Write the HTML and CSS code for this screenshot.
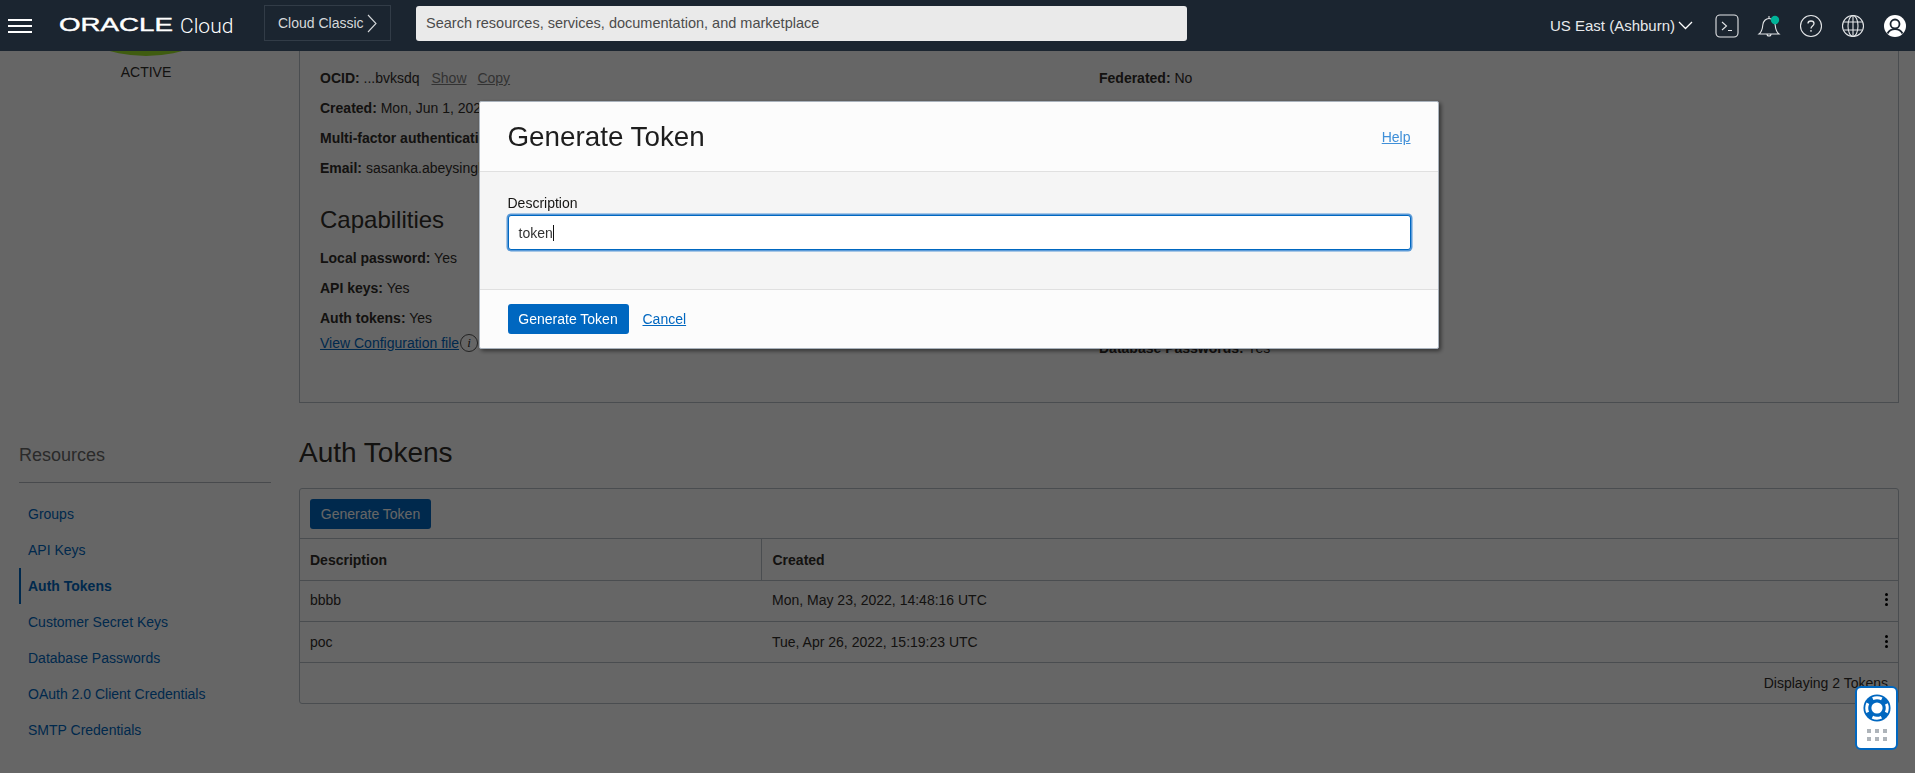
FILE: index.html
```html
<!DOCTYPE html>
<html lang="en">
<head>
    <meta charset="UTF-8">
    <meta name="viewport" content="width=device-width, initial-scale=1.0">
    <title>Auth Tokens - Oracle Cloud</title>
    <link rel="stylesheet" href="styles.css">
</head>
<body>
    <!-- Top bar -->
    <header class="topbar">
        <button class="hamburger" aria-label="Menu"><span></span><span></span><span></span></button>
        <div class="logo"><span class="logo-oracle">ORACLE</span><span class="logo-cloud">Cloud</span></div>
        <div class="classic">Cloud Classic
            <svg width="10" height="19" viewBox="0 0 10 19"><path d="M1 1l8 8.500-8 8.500" fill="none" stroke="#d5d8da" stroke-width="1.100"/></svg>
        </div>
        <div class="search">Search resources, services, documentation, and marketplace</div>
        <div class="region">US East (Ashburn)
            <svg width="15" height="9" viewBox="0 0 15 9"><path d="M1 1l6.500 6.500L14 1" fill="none" stroke="#fff" stroke-width="1.300"/></svg>
        </div>
        <div class="tools">
            <svg width="24" height="24" viewBox="0 0 24 24" fill="none" stroke="#e4e6e8" stroke-width="1.100"><rect x="1" y="1" width="22" height="22" rx="4"/><path d="M7 8l4.500 4L7 16M13 16.500h4"/></svg>
            <svg width="24" height="24" viewBox="0 0 24 24" fill="none" stroke="#e4e6e8" stroke-width="1.100"><path d="M2 20h20c-2.500-2-3.500-5-3.800-9C17.900 7 15 4.500 12 4.500S6.100 7 5.800 11C5.500 15 4.500 18 2 20z"/><path d="M10 20a2 2 0 004 0M12 4.500V2"/><circle cx="18" cy="6" r="4.200" fill="#00b398" stroke="none"/></svg>
            <svg width="24" height="24" viewBox="0 0 24 24" fill="none" stroke="#e4e6e8" stroke-width="1.100"><circle cx="12" cy="12" r="10.500"/><path d="M9 9.500C9 7.800 10.300 7 12 7s3 1 3 2.500c0 2.500-3 2.500-3 5M12 16v1.700" stroke-width="1.300"/></svg>
            <svg width="24" height="24" viewBox="0 0 24 24" fill="none" stroke="#e4e6e8" stroke-width="1.100"><circle cx="12" cy="12" r="10.500"/><ellipse cx="12" cy="12" rx="5" ry="10.500"/><path d="M12 1.500v21M2.500 8h19M2.500 16h19"/></svg>
            <svg width="24" height="24" viewBox="0 0 24 24"><circle cx="12" cy="12" r="11" fill="#fff"/><circle cx="12" cy="10" r="4.500" fill="none" stroke="#1b2530" stroke-width="1.800"/><path d="M4.500 19.500c1.500-3 4-4.300 7.500-4.300s6 1.300 7.500 4.300" fill="none" stroke="#1b2530" stroke-width="1.800"/></svg>
        </div>
    </header>

    <div class="page">
        <!-- Left column -->
        <aside class="sidebar">
            <div class="profile">
                <div class="avatar"></div>
                <div class="status">ACTIVE</div>
            </div>
            <h3 class="res-title">Resources</h3>
            <ul class="res-list">
                <li><a href="#">Groups</a></li>
                <li><a href="#">API Keys</a></li>
                <li class="active"><a href="#">Auth Tokens</a></li>
                <li><a href="#">Customer Secret Keys</a></li>
                <li><a href="#">Database Passwords</a></li>
                <li><a href="#">OAuth 2.0 Client Credentials</a></li>
                <li><a href="#">SMTP Credentials</a></li>
            </ul>
        </aside>

        <main class="content">
            <!-- User info -->
            <section class="info-panel">
                <div class="info-col">
                    <div class="info-row"><b>OCID:</b> ...bvksdq <a class="mini-link" href="#">Show</a> <a class="mini-link" href="#">Copy</a></div>
                    <div class="info-row"><b>Created:</b> Mon, Jun 1, 2020</div>
                    <div class="info-row"><b>Multi-factor authentication:</b> Disabled</div>
                    <div class="info-row"><b>Email:</b> sasanka.abeysinghe</div>
                    <h2 class="cap-title">Capabilities</h2>
                    <div class="info-row"><b>Local password:</b> Yes</div>
                    <div class="info-row"><b>API keys:</b> Yes</div>
                    <div class="info-row"><b>Auth tokens:</b> Yes</div>
                    <div class="config-row"><a href="#">View Configuration file</a><span class="info-icon">i</span></div>
                </div>
                <div class="info-col">
                    <div class="info-row"><b>Federated:</b> No</div>
                    <div class="info-gap"></div>
                    <div class="info-row"><b>Database Passwords:</b> Yes</div>
                </div>
            </section>

            <!-- Tokens table -->
            <h1 class="section-title">Auth Tokens</h1>
            <div class="table-box">
                <div class="table-actions"><button class="btn">Generate Token</button></div>
                <table class="tokens">
                    <thead>
                        <tr><th class="col-desc">Description</th><th class="col-created">Created</th><th class="col-menu"></th></tr>
                    </thead>
                    <tbody>
                        <tr><td>bbbb</td><td class="col-created">Mon, May 23, 2022, 14:48:16 UTC</td><td class="col-menu"><span class="kebab"><i></i><i></i><i></i></span></td></tr>
                        <tr><td>poc</td><td class="col-created">Tue, Apr 26, 2022, 15:19:23 UTC</td><td class="col-menu"><span class="kebab"><i></i><i></i><i></i></span></td></tr>
                    </tbody>
                </table>
                <div class="table-foot">Displaying 2 Tokens</div>
            </div>
        </main>
    </div>

    <!-- Dialog -->
    <div class="overlay">
        <div class="modal">
            <div class="modal-head">
                <h2>Generate Token</h2>
                <a href="#">Help</a>
            </div>
            <div class="modal-body">
                <label class="field-label" for="tokenDesc">Description</label>
                <div class="field" id="tokenDesc">token<span class="caret"></span></div>
            </div>
            <div class="modal-foot">
                <button class="btn">Generate Token</button>
                <a href="#">Cancel</a>
            </div>
        </div>
    </div>

    <!-- Help widget -->
    <div class="help-widget">
        <svg width="28" height="28" viewBox="0 0 30 30"><circle cx="15" cy="15" r="14.500" fill="#0067c0"/><circle cx="15" cy="15" r="11" fill="none" stroke="#fff" stroke-width="3.200" stroke-dasharray="10 7.280" stroke-dashoffset="5"/><circle cx="15" cy="15" r="6" fill="#fff"/></svg>
        <div class="dots"><i></i><i></i><i></i><i></i><i></i><i></i></div>
    </div>
</body>
</html>
```

FILE: styles.css
```css
* {
    margin: 0;
    padding: 0;
    box-sizing: border-box;
}

body {
    font-family: "Liberation Sans", Arial, sans-serif;
    font-size: 14px;
    color: #312d2a;
    background-color: #fff;
    height: 100vh;
    overflow: hidden;
}

a {
    color: #0067c0;
}

/* Top bar */
.topbar {
    position: relative;
    z-index: 5;
    height: 51px;
    padding-right: 8px;
    background-color: #1b2530;
    display: flex;
    align-items: center;
    color: #fff;
}

.hamburger {
    width: 24px;
    margin-left: 8px;
    display: flex;
    flex-direction: column;
    gap: 4px;
    background: none;
    border: none;
}

.hamburger span {
    height: 2px;
    background-color: #fff;
}

.logo {
    width: 205px;
    margin-left: 27px;
    flex-shrink: 0;
    display: flex;
    align-items: center;
}

.logo-oracle {
    display: inline-block;
    width: 74px;
    margin-right: 47px;
    font-size: 18px;
    transform: scaleX(1.54);
    transform-origin: left center;
    -webkit-text-stroke: 0.4px #fff;
}

.logo-cloud {
    font-family: Roboto, sans-serif;
    font-size: 21px;
    font-weight: 300;
}

.classic {
    width: 127px;
    height: 36px;
    margin-top: -5px;
    padding-left: 13px;
    display: flex;
    align-items: center;
    gap: 3px;
    flex-shrink: 0;
    border: 1px solid #323c47;
    color: #d5d8da;
    white-space: nowrap;
}

.search {
    width: 771px;
    height: 35px;
    margin-left: 25px;
    margin-top: -5px;
    padding-left: 10px;
    display: flex;
    align-items: center;
    background-color: #eaeaea;
    border-radius: 3px;
    font-size: 14.500px;
    color: #4c4c4c;
}

.region {
    margin-left: auto;
    display: flex;
    align-items: center;
    gap: 3px;
    font-size: 15px;
    color: #e8eaec;
    white-space: nowrap;
}

.tools {
    margin-left: 22px;
    display: flex;
    align-items: center;
    gap: 18px;
}

/* Page under the dialog */
.page {
    display: flex;
}

.sidebar {
    width: 299px;
    flex-shrink: 0;
    padding-right: 28px;
}

.profile {
    width: 292px;
    display: flex;
    flex-direction: column;
    align-items: center;
}

.avatar {
    width: 280px;
    height: 280px;
    margin-top: -275px;
    border-radius: 50%;
    background-color: #9ee52a;
}

.status {
    margin-top: 8px;
}

.res-title {
    margin-top: 365px;
    margin-left: 19px;
    padding-bottom: 16px;
    border-bottom: 1px solid #b4bac0;
    font-size: 18px;
    font-weight: 300;
    color: #6a6a6a;
}

.res-list {
    margin-top: 13px;
    margin-left: 19px;
    list-style: none;
}

.res-list li {
    height: 36px;
    padding-left: 9px;
    display: flex;
    align-items: center;
}

.res-list a {
    text-decoration: none;
}

.res-list .active {
    border-left: 2px solid #0067c0;
    padding-left: 7px;
    font-weight: bold;
}

.content {
    flex: 1;
    padding-right: 17px;
}

.info-panel {
    height: 352px;
    padding: 12px 20px 0;
    display: flex;
    border: 1px solid #b8c0c8;
    border-top: none;
}

.info-col {
    width: 779px;
}

.info-row {
    height: 30px;
    line-height: 30px;
    white-space: nowrap;
}

.info-gap {
    height: 240px;
}

.mini-link {
    margin-left: 8px;
    color: #7f7f7f;
}

.mini-link + .mini-link {
    margin-left: 7px;
}

.cap-title {
    height: 60px;
    padding-top: 23px;
    font-size: 24px;
    font-weight: normal;
}

.config-row {
    display: flex;
    align-items: center;
    height: 20px;
}

.info-icon {
    width: 18px;
    height: 18px;
    margin-left: 1px;
    border: 1px solid #555;
    border-radius: 50%;
    text-align: center;
    line-height: 16px;
    font-family: "Liberation Serif", serif;
    font-style: italic;
    font-size: 13px;
}

.section-title {
    height: 85px;
    padding-top: 34px;
    font-size: 28px;
    line-height: 32px;
    font-weight: normal;
}

.table-box {
    border: 1px solid #b8c0c8;
    border-radius: 3px;
}

.table-actions {
    height: 50px;
    padding: 10px;
    border-bottom: 1px solid #b8c0c8;
}

.btn {
    width: 121px;
    height: 30px;
    background-color: #0067c0;
    color: #fff;
    border: none;
    border-radius: 3px;
    font-family: inherit;
    font-size: 14px;
}

.tokens {
    width: 100%;
    border-collapse: collapse;
    table-layout: fixed;
}

.tokens th, .tokens td {
    height: 41px;
    padding: 0 10px;
    text-align: left;
    border-bottom: 1px solid #b8c0c8;
}

.tokens th {
    padding-top: 2px;
}

.tokens tbody tr:first-child td {
    padding-bottom: 2px;
}

.tokens .col-desc {
    width: 461px;
    border-right: 1px solid #b8c0c8;
}

.tokens .col-created {
    padding-left: 11px;
}

.tokens .col-menu {
    width: 26px;
    padding: 0;
}

.kebab {
    display: flex;
    flex-direction: column;
    align-items: center;
    gap: 2px;
    width: 24px;
    margin-left: 2px;
}

.kebab i {
    width: 3px;
    height: 3px;
    border-radius: 50%;
    background-color: #000;
}

.table-foot {
    height: 40px;
    line-height: 40px;
    padding-right: 10px;
    text-align: right;
}

/* Dialog */
.overlay {
    position: fixed;
    top: 51px;
    left: 0;
    right: 0;
    bottom: 0;
    z-index: 3;
    padding: 50px 0 0 2px;
    display: flex;
    justify-content: center;
    align-items: flex-start;
    background-color: rgba(0, 0, 0, 0.6);
}

.modal {
    width: 960px;
    background-color: #fcfcfc;
    border-radius: 2px;
    border: 1px solid #a9b2bc;
    box-shadow: 2px 2px 4px rgba(0, 0, 0, 0.5);
}

.modal-head {
    height: 70px;
    padding: 0 27px 0 28px;
    display: flex;
    align-items: center;
    justify-content: space-between;
    border-bottom: 1px solid #e0e0e0;
}

.modal-head h2 {
    font-size: 27.800px;
    font-weight: normal;
    color: #1e1e1e;
}

.modal-head a {
    color: #3f8fd8;
}

.modal-body {
    height: 118px;
    padding: 23px 27px 0 28px;
    background-color: #f5f5f5;
    border-bottom: 1px solid #e0e0e0;
}

.field-label {
    display: block;
    margin-bottom: 4px;
    color: #161513;
}

.field {
    height: 35px;
    padding-left: 10px;
    display: flex;
    align-items: center;
    background-color: #fff;
    border: 1px solid #0067c0;
    border-radius: 3px;
    box-shadow: 0 0 0 1.500px #5a9ad8;
    color: #333;
}

.caret {
    width: 1px;
    height: 16px;
    background-color: #111;
}

.modal-foot {
    height: 58px;
    padding: 0 27px 0 28px;
    display: flex;
    align-items: center;
    gap: 14px;
}

/* Help widget */
.help-widget {
    position: fixed;
    right: 17px;
    bottom: 23px;
    z-index: 6;
    width: 43px;
    height: 64px;
    padding-top: 6px;
    display: flex;
    flex-direction: column;
    align-items: center;
    gap: 7px;
    background-color: #fff;
    border: 2.500px solid #0067c0;
    border-radius: 6px;
}

.dots {
    display: grid;
    grid-template-columns: repeat(3, 4px);
    gap: 4px;
}

.dots i {
    width: 4px;
    height: 4px;
    background-color: #aeb4ba;
}
```
